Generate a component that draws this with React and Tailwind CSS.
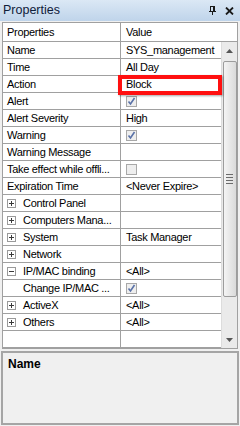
import React from "react";

const rows = [
  { label: "Name", value: "SYS_management" },
  { label: "Time", value: "All Day" },
  { label: "Action", value: "Block" },
  { label: "Alert", check: true },
  { label: "Alert Severity", value: "High" },
  { label: "Warning", check: true },
  { label: "Warning Message", value: "" },
  { label: "Take effect while offli...", check: false },
  { label: "Expiration Time", value: "<Never Expire>" },
  { label: "Control Panel", value: "", cat: "+" },
  { label: "Computers Mana...", value: "", cat: "+" },
  { label: "System", value: "Task Manager", cat: "+" },
  { label: "Network", value: "", cat: "+" },
  { label: "IP/MAC binding", value: "<All>", cat: "-" },
  { label: "Change IP/MAC ...", check: true, child: true },
  { label: "ActiveX", value: "<All>", cat: "+" },
  { label: "Others", value: "<All>", cat: "+" },
  { label: "", value: "" },
];

function Box({ sign }) {
  return (
    <span className="w-[9px] h-[9px] border border-[#9a9a9a] bg-white flex items-center justify-center shrink-0">
      <svg width="7" height="7" viewBox="0 0 7 7">
        <rect x="1" y="3" width="5" height="1" fill="#3a3a3a" />
        {sign === "+" && <rect x="3" y="1" width="1" height="5" fill="#3a3a3a" />}
      </svg>
    </span>
  );
}

function Check({ checked }) {
  return (
    <span className="w-[11px] h-[11px] border border-[#a8a8a8] bg-[#eeeeee] flex items-center justify-center">
      {checked && (
        <svg width="9" height="9" viewBox="0 0 9 9">
          <path d="M1.5 4.5 L3.5 7 L7.5 1" stroke="#5a72a8" strokeWidth="1.6" fill="none" />
        </svg>
      )}
    </span>
  );
}

export default function App() {
  return (
    <div
      className="relative w-[240px] h-[426px] bg-[#f0f0f0] overflow-hidden text-black"
      style={{ fontFamily: '"Liberation Sans", Arial, sans-serif' }}
    >
      {/* title bar */}
      <div className="h-[21px] bg-gradient-to-b from-[#dbe8f5] to-[#bfd4ea] flex items-center justify-between pl-[3px] pr-[6px]">
        <span className="text-[12.5px] text-[#10203a] leading-none">Properties</span>
        <div className="flex items-center gap-[9px]">
          <svg width="7" height="9" viewBox="0 0 7 9">
            <rect x="1" y="0" width="5" height="1" fill="#1a1a1a" />
            <rect x="1" y="0" width="1" height="5" fill="#1a1a1a" />
            <rect x="4" y="0" width="2" height="5" fill="#1a1a1a" />
            <rect x="0" y="5" width="7" height="1" fill="#1a1a1a" />
            <rect x="3" y="6" width="1" height="3" fill="#1a1a1a" />
          </svg>
          <svg width="9" height="8" viewBox="0 0 9 8">
            <path d="M1 0.5 L8 7.5 M8 0.5 L1 7.5" stroke="#1a1a1a" strokeWidth="1.8" />
          </svg>
        </div>
      </div>

      {/* grid */}
      <div className="mx-[2px] mt-[1px] border border-[#a0a0a0] bg-white text-[11px] tracking-[-0.3px] leading-none">
        <div className="h-[19px] flex border-b border-[#a0a0a0]">
          <div className="w-[118px] border-r border-[#a0a0a0] flex items-center pl-[4px]">Properties</div>
          <div className="flex-1 flex items-center pl-[5px]">Value</div>
        </div>
        <div className="flex">
          <div className="flex-1">
            {rows.map((r, i) => (
              <div key={i} className="h-[17px] flex border-b border-[#a0a0a0]">
                <div className="w-[118px] border-r border-[#a0a0a0] flex items-center pl-[4px] whitespace-nowrap overflow-hidden">
                  {r.cat && <Box sign={r.cat} />}
                  <span className={r.cat || r.child ? "pl-[7px]" : ""} style={r.child ? { paddingLeft: 16 } : undefined}>
                    {r.label}
                  </span>
                </div>
                <div className="flex-1 flex items-center pl-[5px] whitespace-nowrap">
                  {r.check !== undefined ? <Check checked={r.check} /> : r.value}
                </div>
              </div>
            ))}
          </div>
          {/* scrollbar */}
          <div className="w-[16px] bg-[#eaeaea] border-l border-[#dcdcdc] flex flex-col items-center">
            <div className="h-[17px] flex items-center justify-center">
              <svg width="7" height="4" viewBox="0 0 7 4"><path d="M0 4 L3.5 0 L7 4Z" fill="#555" /></svg>
            </div>
            <div className="mt-[2px] w-[14px] h-[236px] border border-[#9c9c9c] rounded-[2px] bg-gradient-to-r from-[#f4f4f4] to-[#dadada] flex items-center justify-center">
              <div className="flex flex-col gap-[2px]">
                <div className="w-[7px] h-[1px] bg-[#6b6b6b]" />
                <div className="w-[7px] h-[1px] bg-[#6b6b6b]" />
                <div className="w-[7px] h-[1px] bg-[#6b6b6b]" />
                <div className="w-[7px] h-[1px] bg-[#6b6b6b]" />
              </div>
            </div>
            <div className="flex-1" />
            <div className="h-[17px] flex items-center justify-center">
              <svg width="7" height="4" viewBox="0 0 7 4"><path d="M0 0 L3.5 4 L7 0Z" fill="#555" /></svg>
            </div>
          </div>
        </div>
      </div>

      {/* description */}
      <div className="mx-[1px] mt-[2px] h-[74px] border-2 border-[#a5a5a5] bg-[#f0f0f0] px-[5px] pt-[4px]">
        <div className="text-[12px] font-bold leading-[14px]">Name</div>
      </div>

      {/* annotation */}
      <div className="absolute left-[118px] top-[75px] w-[104px] h-[20px] border-[4px] border-[#ff1010] shadow-[1px_1px_2px_rgba(0,0,0,0.35)]" />
    </div>
  );
}
